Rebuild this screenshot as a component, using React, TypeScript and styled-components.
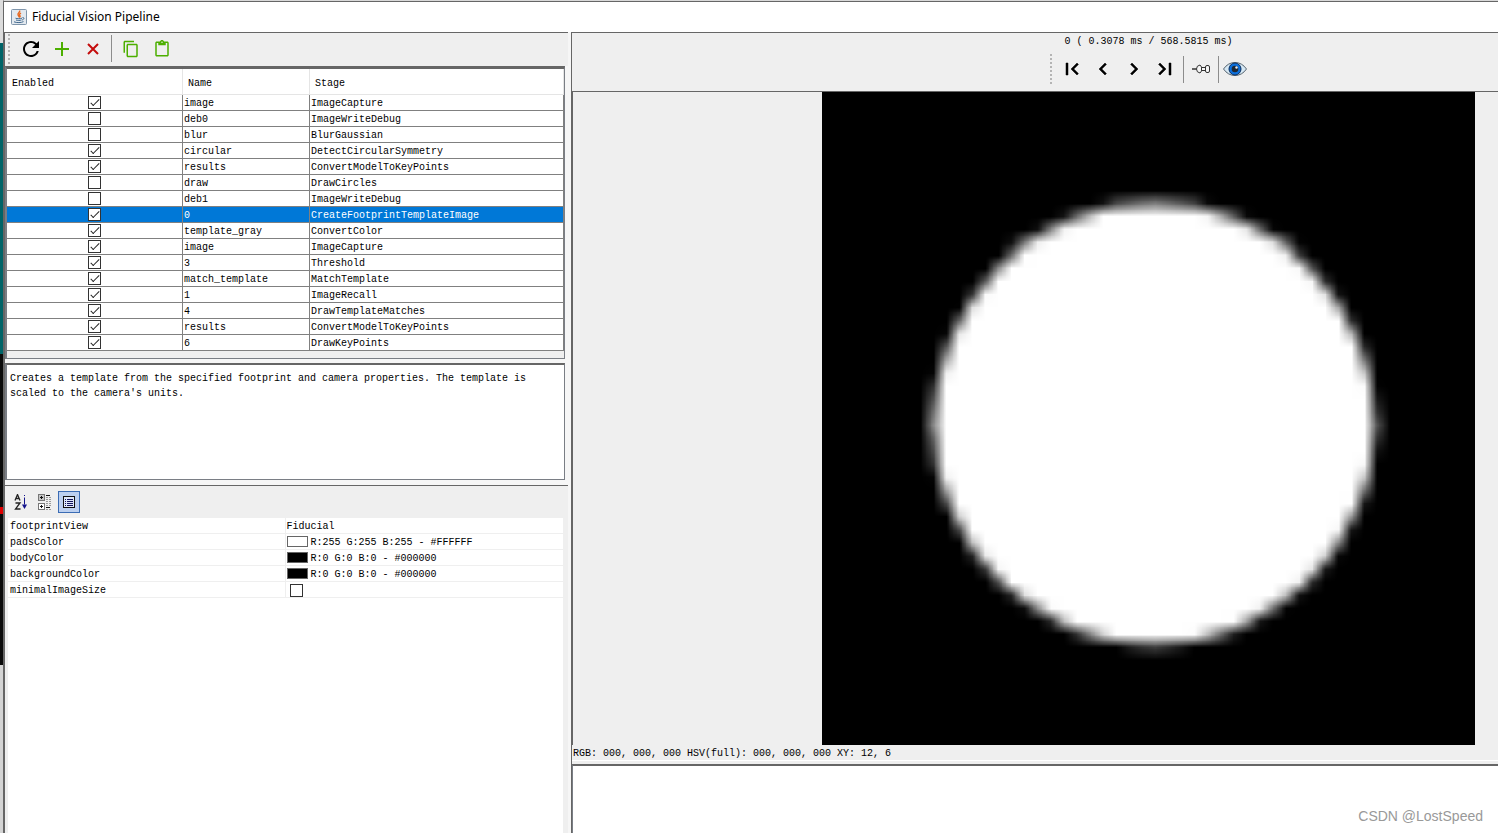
import React, { useEffect, useRef } from "react";
import styled, { createGlobalStyle } from "styled-components";
import {
  MdRefresh,
  MdAdd,
  MdContentCopy,
  MdContentPaste,
  MdFirstPage,
  MdLastPage,
  MdNavigateBefore,
  MdNavigateNext,
} from "react-icons/md";

const GlobalStyle = createGlobalStyle`
  *, *::before, *::after { box-sizing: border-box; }
  body {
    margin: 0;
    background: #efefef;
    color: #000;
    font-family: "Liberation Mono", monospace;
    font-size: 10px;
    line-height: 15px;
  }
`;

const Screen = styled.div`
  display: flex;
  min-height: 100vh;
`;

/* The strip of the application window behind this dialog */
const Behind = styled.div`
  flex: 0 0 3px;
  display: flex;
  flex-direction: column;
  background: #d4d4d4;
`;

const BehindPart = styled.div<{ $color: string; $height: number }>`
  height: ${(p) => p.$height}px;
  background: ${(p) => p.$color};
`;

const Dialog = styled.div`
  flex: 1;
  min-width: 0;
  display: flex;
  flex-direction: column;
  border-left: 1px solid #666;
  border-top: 1px solid #d8d8d8;
`;

const TitleBar = styled.header`
  display: flex;
  align-items: center;
  gap: 5px;
  height: 31px;
  padding-left: 7px;
  background: #fff;
  border-top: 1px solid #666;
`;

const Title = styled.h1`
  margin: 0;
  font: 400 12px/16px "Noto Sans", sans-serif;
`;

const Body = styled.div`
  flex: 1;
  display: flex;
  gap: 3px;
  background: #f6f6f6;
`;

const LeftPane = styled.div`
  flex: 0 0 564px;
  display: flex;
  flex-direction: column;
  border-left: 1px solid #666;
  border-top: 1px solid #666;
`;

const RightPane = styled.main`
  flex: 1;
  min-width: 0;
  display: flex;
  flex-direction: column;
  background: #efefef;
  border-left: 1px solid #666;
  border-top: 1px solid #666;
`;

const Toolbar = styled.div`
  display: flex;
  align-items: center;
  height: 33px;
  padding: 0 0 2px 3px;
  background: #efefef;
`;

const Grip = styled.span`
  width: 2px;
  height: 30px;
  margin-right: 5px;
  background: repeating-linear-gradient(#b4b4b4 0 2px, transparent 2px 4px);
`;

const Separator = styled.span<{ $gap: number }>`
  width: 1px;
  height: 27px;
  margin: 0 ${(p) => p.$gap}px;
  background: #8c8c8c;
`;

const ToolButton = styled.button<{ $color?: string; $bold?: boolean }>`
  display: flex;
  align-items: center;
  justify-content: center;
  width: 31px;
  height: 30px;
  padding: 0;
  border: 0;
  background: none;
  color: ${(p) => p.$color ?? "#000"};
  path:not([fill="none"]) {
    ${(p) => (p.$bold ? "stroke: #000; stroke-width: 0.5;" : "")}
  }
`;

const StagesPanel = styled.section`
  height: 293px;
  margin-right: 3px;
  background: #efefef;
  border: 1px solid #7a7e85;
  border-top: 3px solid #666;
  border-left: 2px solid #7a7e85;
`;

const StageTable = styled.table`
  width: 100%;
  table-layout: fixed;
  border-collapse: separate;
  border-spacing: 0;
  background: #fff;
`;

const HeadCell = styled.th`
  height: 26px;
  padding: 4px 5px 0;
  text-align: left;
  font-weight: 400;
  border-right: 1px solid #e5e5e5;
  border-bottom: 1px solid #e5e5e5;
`;

const StageRow = styled.tr<{ $selected: boolean }>`
  background: ${(p) => (p.$selected ? "#0078d7" : "#fff")};
  color: ${(p) => (p.$selected ? "#fff" : "#000")};
`;

const StageCell = styled.td<{ $center?: boolean }>`
  height: 16px;
  padding: ${(p) => (p.$center ? "0" : "2px 1px 0")};
  line-height: 13px;
  white-space: nowrap;
  border-right: 1px solid #808080;
  border-bottom: 1px solid #808080;
`;

const Tick = styled.input`
  appearance: none;
  display: block;
  position: relative;
  width: 13px;
  height: 13px;
  margin: 0 auto;
  background: #fff;
  border: 1px solid #333;
  &:checked::before {
    content: "";
    position: absolute;
    left: 4px;
    top: 0;
    width: 4px;
    height: 9px;
    border: solid #222;
    border-width: 0 1px 1px 0;
    transform: rotate(45deg);
  }
`;

const Description = styled.p`
  height: 117px;
  margin: 4px 3px 0 0;
  padding: 6px 3px;
  background: #fff;
  border: 1px solid #7a7e85;
  border-top: 2px solid #666;
  border-left: 2px solid #7a7e85;
`;

const Properties = styled.section`
  flex: 1;
  display: flex;
  flex-direction: column;
  margin-top: 5px;
  padding: 0 5px 0 3px;
  background: #efefef;
  border-top: 1px solid #666;
`;

const PropertyTools = styled.div`
  display: flex;
  align-items: center;
  gap: 2px;
  height: 32px;
  padding-left: 2px;
`;

const PropertyTool = styled.button<{ $active?: boolean }>`
  display: flex;
  align-items: center;
  justify-content: center;
  width: 22px;
  height: 22px;
  padding: 0;
  border: 1px solid ${(p) => (p.$active ? "#3b6cb4" : "transparent")};
  background: ${(p) => (p.$active ? "#bcd0f0" : "none")};
`;

const PropertyBody = styled.div`
  flex: 1;
  background: #fff;
`;

const PropertyTable = styled.table`
  width: 100%;
  table-layout: fixed;
  border-collapse: separate;
  border-spacing: 0;
  line-height: 13px;
`;

const PropertyName = styled.th`
  height: 16px;
  padding: 2px 2px 0;
  text-align: left;
  font-weight: 400;
  border-right: 1px solid #efefef;
  border-bottom: 1px solid #efefef;
`;

const PropertyValue = styled.td`
  height: 16px;
  padding: 2px 1px 0;
  border-bottom: 1px solid #efefef;
`;

const ValueLine = styled.span<{ $indent?: number }>`
  display: flex;
  align-items: center;
  gap: 3px;
  padding-left: ${(p) => p.$indent ?? 0}px;
  ${Tick} { margin: 0; }
`;

const Swatch = styled.span<{ $color: string }>`
  width: 21px;
  height: 11px;
  margin-bottom: 2px;
  background: ${(p) => p.$color};
  border: 1px solid #666;
`;

const ResultHeader = styled.div`
  display: flex;
  flex-direction: column;
  align-items: center;
  height: 59px;
  padding: 1px 23px 0 250px;
  border-bottom: 1px solid #666;
`;

const Timing = styled.output`
  line-height: 16px;
`;

const ResultTools = styled.div`
  display: flex;
  align-items: center;
  height: 38px;
  padding-left: 3px;
`;

const Stage = styled.div`
  flex: 1;
  min-height: 0;
  display: flex;
  padding: 0 23px 0 249px;
  border-left: 1px solid #666;
`;

const Picture = styled.canvas`
  flex: 1;
  min-width: 0;
  aspect-ratio: 1;
  object-fit: contain;
`;

const Status = styled.div`
  height: 16px;
  padding-left: 1px;
  line-height: 17px;
  border-bottom: 1px solid #fff;
`;

const Console = styled.section`
  display: flex;
  align-items: flex-end;
  justify-content: flex-end;
  height: 69px;
  margin-top: 3px;
  padding: 0 15px 8px 0;
  background: #fff;
  border-top: 2px solid #666;
  border-left: 1px solid #7a7e85;
`;

const Watermark = styled.span`
  font: 400 14px/18px "Liberation Sans", sans-serif;
  color: #999;
`;

const JavaIcon = () => (
  <svg width="16" height="16" viewBox="0 0 16 16" fill="none">
    <rect x="0.5" y="0.5" width="15" height="15" rx="1" fill="#e3e9ef" stroke="#7f95ab" />
    <path d="M8.6 1.5c1 2-2.6 2.5-1.5 4.5.4.9 1.3 1.3.9 2.500M10 4c-1.5.9-1.9 1.7-1.1 2.7.5.6.2 1.2-.4 1.6" stroke="#e8661c" strokeWidth="1.400" />
    <path d="M4.500 9.200c1.500.7 5 .6 6.500 0M5 11c1.500.6 4 .6 5.500 0M3 12.800c2.500 1.200 7.500 1 9.500-.2M11.500 8.500c2.200-.2 1.700 2-.4 2.500" stroke="#42698f" />
  </svg>
);

const DeleteIcon = () => (
  <svg width="14" height="14" viewBox="0 0 14 14">
    <path d="M2 2l10 10M12 2L2 12" stroke="#c40c0c" strokeWidth="2" />
  </svg>
);

const PinIcon = () => (
  <svg width="18" height="10" viewBox="0 0 18 10" fill="#f6f6f6" stroke="#333">
    <path d="M0 5h5" strokeWidth="1.500" />
    <path d="M8 1Q4.500 1.500 4.500 5T8 9L9.500 7V3z" />
    <path d="M9.500 3.500h4v3h-4z" />
    <rect x="13.500" y="1.500" width="4" height="7" rx="1.500" />
  </svg>
);

const EyeIcon = () => (
  <svg width="24" height="16" viewBox="0 0 24 16">
    <path d="M.5 8Q5 1.500 12 1.500T23.500 8Q19 14.500 12 14.500T.5 8z" fill="#d6e8f4" stroke="#55636e" />
    <circle cx="12" cy="8" r="6" fill="#0b6fdc" stroke="#0a2d5c" />
    <circle cx="12" cy="8" r="3.300" fill="#1d2733" />
    <circle cx="13.500" cy="6.500" r="1.200" fill="#e6eef5" />
  </svg>
);

const SortIcon = () => (
  <svg width="14" height="16" viewBox="0 0 14 16" fill="none">
    <path d="M1 6.500L3.500 .5L6 6.500M2 4.500h3" stroke="#222" strokeWidth="1.300" />
    <path d="M1.500 9h4.500L1.500 15H6.500" stroke="#222" strokeWidth="1.300" />
    <path d="M10.500 1v1M10.500 3.500v7" stroke="#14148c" />
    <path d="M8 10.500h5l-2.500 4.500z" fill="#14148c" />
  </svg>
);

const CategoryIcon = () => (
  <svg width="16" height="16" viewBox="0 0 16 16" fill="none" shapeRendering="crispEdges">
    <rect x="1.500" y="0.500" width="6" height="6" fill="#c8c8c8" stroke="#777" />
    <rect x="1.500" y="9.500" width="6" height="6" fill="#fff" stroke="#777" />
    <path d="M3 3.500h3M4.500 2v3M3 12.500h3M4.500 11v3" stroke="#111" />
    <path d="M9 1.500h4M9 13.500h4" stroke="#111" />
    <path d="M9 3.500h6M9 5.500h6M9 7.500h6M9 9.500h6M9 11.500h6M9 15.500h6" stroke="#999" strokeDasharray="2 1" />
  </svg>
);

const ListIcon = () => (
  <svg width="12" height="12" viewBox="0 0 12 12" shapeRendering="crispEdges">
    <rect x="0.500" y="0.500" width="11" height="11" fill="#dde8fa" stroke="#111" />
    <path d="M2 3.500h1M4 3.500h6M2 5.500h1M4 5.500h6M2 7.500h1M4 7.500h6M2 9.500h1M4 9.500h6" stroke="#14145c" />
  </svg>
);

/* Low resolution fiducial mask: 50 x 50 samples, scaled up smoothly by the browser */
const FiducialImage = () => {
  const ref = useRef<HTMLCanvasElement>(null);
  useEffect(() => {
    const ctx = ref.current?.getContext("2d");
    if (!ctx) return;
    ctx.fillStyle = "#000";
    ctx.fillRect(0, 0, 50, 50);
    ctx.fillStyle = "#fff";
    ctx.beginPath();
    ctx.arc(25.4, 25.35, 16.9, 0, Math.PI * 2);
    ctx.fill();
  }, []);
  return <Picture ref={ref} width={50} height={50} role="img" aria-label="Fiducial template" />;
};

const stages: [boolean, string, string][] = [
  [true, "image", "ImageCapture"],
  [false, "deb0", "ImageWriteDebug"],
  [false, "blur", "BlurGaussian"],
  [true, "circular", "DetectCircularSymmetry"],
  [true, "results", "ConvertModelToKeyPoints"],
  [false, "draw", "DrawCircles"],
  [false, "deb1", "ImageWriteDebug"],
  [true, "0", "CreateFootprintTemplateImage"],
  [true, "template_gray", "ConvertColor"],
  [true, "image", "ImageCapture"],
  [true, "3", "Threshold"],
  [true, "match_template", "MatchTemplate"],
  [true, "1", "ImageRecall"],
  [true, "4", "DrawTemplateMatches"],
  [true, "results", "ConvertModelToKeyPoints"],
  [true, "6", "DrawKeyPoints"],
];

const selectedStage = 7;

const colors: [string, string, string][] = [
  ["padsColor", "#ffffff", "R:255 G:255 B:255 - #FFFFFF"],
  ["bodyColor", "#000000", "R:0 G:0 B:0 - #000000"],
  ["backgroundColor", "#000000", "R:0 G:0 B:0 - #000000"],
];

export default function App() {
  return (
    <Screen>
      <GlobalStyle />
      <Behind>
        <BehindPart $color="#dcdcdc" $height={43} />
        <BehindPart $color="#006468" $height={311} />
        <BehindPart $color="#0a0a0a" $height={153} />
        <BehindPart $color="#e00000" $height={7} />
        <BehindPart $color="#0a0a0a" $height={151} />
      </Behind>
      <Dialog>
        <TitleBar>
          <JavaIcon />
          <Title>Fiducial Vision Pipeline</Title>
        </TitleBar>
        <Body>
          <LeftPane>
            <Toolbar>
              <Grip />
              <ToolButton aria-label="Refresh"><MdRefresh size={24} /></ToolButton>
              <ToolButton aria-label="Add stage" $color="#4caf00"><MdAdd size={24} /></ToolButton>
              <ToolButton aria-label="Remove stage"><DeleteIcon /></ToolButton>
              <Separator $gap={3} />
              <ToolButton aria-label="Copy" $color="#4caf00"><MdContentCopy size={18} /></ToolButton>
              <ToolButton aria-label="Paste" $color="#4caf00"><MdContentPaste size={18} /></ToolButton>
            </Toolbar>
            <StagesPanel>
              <StageTable>
                <colgroup>
                  <col width="176" />
                  <col width="127" />
                  <col />
                </colgroup>
                <thead>
                  <tr>
                    <HeadCell>Enabled</HeadCell>
                    <HeadCell>Name</HeadCell>
                    <HeadCell>Stage</HeadCell>
                  </tr>
                </thead>
                <tbody>
                  {stages.map(([enabled, name, stage], i) => (
                    <StageRow key={i} $selected={i === selectedStage}>
                      <StageCell $center>
                        <Tick type="checkbox" defaultChecked={enabled} aria-label={`Enable ${name}`} />
                      </StageCell>
                      <StageCell>{name}</StageCell>
                      <StageCell>{stage}</StageCell>
                    </StageRow>
                  ))}
                </tbody>
              </StageTable>
            </StagesPanel>
            <Description>
              Creates a template from the specified footprint and camera properties. The template is
              scaled to the camera's units.
            </Description>
            <Properties>
              <PropertyTools>
                <PropertyTool aria-label="Sort"><SortIcon /></PropertyTool>
                <PropertyTool aria-label="Group by category"><CategoryIcon /></PropertyTool>
                <PropertyTool aria-label="Show description" $active><ListIcon /></PropertyTool>
              </PropertyTools>
              <PropertyBody>
                <PropertyTable>
                  <tbody>
                    <tr>
                      <PropertyName scope="row">footprintView</PropertyName>
                      <PropertyValue>Fiducial</PropertyValue>
                    </tr>
                    {colors.map(([name, color, text]) => (
                      <tr key={name}>
                        <PropertyName scope="row">{name}</PropertyName>
                        <PropertyValue>
                          <ValueLine>
                            <Swatch $color={color} />
                            {text}
                          </ValueLine>
                        </PropertyValue>
                      </tr>
                    ))}
                    <tr>
                      <PropertyName scope="row">
                        <label htmlFor="minimal">minimalImageSize</label>
                      </PropertyName>
                      <PropertyValue>
                        <ValueLine $indent={3}>
                          <Tick type="checkbox" id="minimal" />
                        </ValueLine>
                      </PropertyValue>
                    </tr>
                  </tbody>
                </PropertyTable>
              </PropertyBody>
            </Properties>
          </LeftPane>
          <RightPane>
            <ResultHeader>
              <Timing>0 ( 0.3078 ms / 568.5815 ms)</Timing>
              <ResultTools>
                <Grip />
                <ToolButton aria-label="First stage" $bold><MdFirstPage size={24} /></ToolButton>
                <ToolButton aria-label="Previous stage" $bold><MdNavigateBefore size={24} /></ToolButton>
                <ToolButton aria-label="Next stage" $bold><MdNavigateNext size={24} /></ToolButton>
                <ToolButton aria-label="Last stage" $bold><MdLastPage size={24} /></ToolButton>
                <Separator $gap={2} />
                <ToolButton aria-label="Pin output"><PinIcon /></ToolButton>
                <Separator $gap={1} />
                <ToolButton aria-label="Show result"><EyeIcon /></ToolButton>
              </ResultTools>
            </ResultHeader>
            <Stage>
              <FiducialImage />
            </Stage>
            <Status>RGB: 000, 000, 000 HSV(full): 000, 000, 000 XY: 12, 6</Status>
            <Console>
              <Watermark>CSDN @LostSpeed</Watermark>
            </Console>
          </RightPane>
        </Body>
      </Dialog>
    </Screen>
  );
}
